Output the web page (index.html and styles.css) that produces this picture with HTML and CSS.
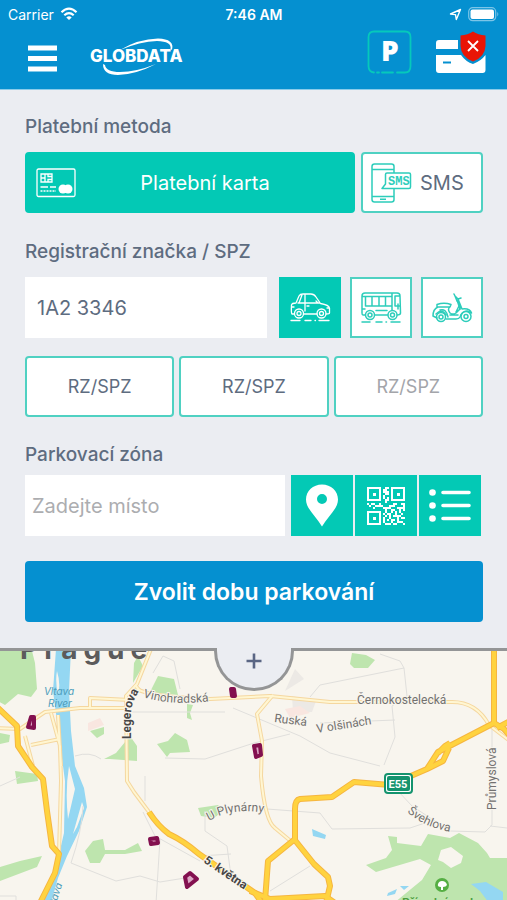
FILE: index.html
```html
<!DOCTYPE html>
<html lang="cs">
<head>
    <meta charset="UTF-8">
    <meta name="viewport" content="width=device-width, initial-scale=1.0">
    <title>Globdata parkování</title>
    <link rel="stylesheet" href="styles.css">
</head>
<body>
    <header class="header">
        <div class="status">
            <div class="status-left">
                <span>Carrier</span>
                <svg width="18" height="14" viewBox="0 0 18 14" fill="none" stroke="#fff" stroke-width="2.2">
                    <path d="M1.5 5.2Q9-1.8 16.5 5.2M4.3 8.3Q9 4 13.7 8.3"/>
                    <path d="M9 13L6.3 10.4Q9 8.2 11.7 10.4Z" fill="#fff" stroke="none"/>
                </svg>
            </div>
            <span class="time">7:46 AM</span>
            <div class="status-right">
                <svg width="13" height="13" viewBox="0 0 13 13" fill="none" stroke="#fff" stroke-width="1.4" stroke-linejoin="round">
                    <path d="M1.5 6L11.5 1.5L7.3 11.5L6.5 6.6Z"/>
                </svg>
                <svg width="32" height="15" viewBox="0 0 32 15">
                    <rect x="0.7" y="0.7" width="27" height="13" rx="4" fill="none" stroke="#7cc5e8" stroke-width="1.2"/>
                    <rect x="2.5" y="2.5" width="23.5" height="9.5" rx="2" fill="#fff"/>
                    <path d="M29.3 5Q31.3 7.2 29.3 9.5Z" fill="#7cc5e8"/>
                </svg>
            </div>
        </div>
        <nav class="nav">
            <button class="icon-btn menu-btn" type="button" aria-label="Menu">
                <svg width="29" height="27" viewBox="0 0 29 27" fill="#fff">
                    <path d="M0 0.5H29V5.5H0ZM0 11H29V16H0ZM0 21.5H29V26.5H0Z"/>
                </svg>
            </button>
            <a href="#" class="logo" aria-label="Globdata">
                <svg width="94" height="40" viewBox="0 0 94 40" fill="#fff">
                    <path d="M30 13Q48 2 68 1.5Q85 2 82 13L80.500 12Q82 4.500 67 4Q50 4.500 30 13Z"/>
                    <path d="M13 27Q13 38 28 38Q46 37.500 66 27Q46 35 30 35Q16 35 15 28Z"/>
                    <text x="0" y="25" class="logo-text">GLOBDATA</text>
                </svg>
            </a>
            <button class="icon-btn parking-btn" type="button" aria-label="Parkování">
                <svg width="45" height="44" viewBox="0 0 45 44" fill="none" stroke="#06c9bb" stroke-width="1.8" stroke-linecap="round">
                    <path d="M7 42.500Q1.500 42 1.500 36V7Q1.500 1.500 7 1.500H38Q43.500 1.500 43.500 7V36Q43.500 42.500 38 42.500H30M10 42.500H12M15 42.500H26"/>
                    <text x="14" y="31" class="p-text">P</text>
                </svg>
            </button>
            <button class="icon-btn" type="button" aria-label="Platební karta">
                <svg width="50" height="43" viewBox="0 0 50 43">
                    <path d="M3 9H22V18H0V12Q0 9 3 9ZM0 24H25Q30 31 37 33Q45 30 49.500 24V39Q49.500 42 46.500 42H3Q0 42 0 39Z" fill="#fff"/>
                    <path d="M7 31.500H15" stroke="#0590d0" stroke-width="2"/>
                    <path d="M37 0.500Q42 4 49.500 4.500V15Q49 26 37 30.500Q25 26 24.500 15V4.500Q32 4 37 0.500Z" fill="#e91506"/>
                    <path d="M32 10L42 20M42 10L32 20" stroke="#fff" stroke-width="1.8"/>
                </svg>
            </button>
        </nav>
    </header>

    <form class="panel" id="parkingForm">
        <h2>Platební metoda</h2>
        <div class="row methods">
            <button type="button" class="btn active card-btn">
                <svg width="40" height="30" viewBox="0 0 40 30" fill="none" stroke="#fff" stroke-width="1.3">
                    <rect x="1" y="1" width="38" height="27.500" rx="1.500"/>
                    <path d="M5 6H16V14H5ZM5 10H9M9 6V14M12 6V8.500H16M12 14V11.500H16"/>
                    <path d="M4.500 19H12M14 19H20"/>
                    <path d="M4.500 23H20" stroke-dasharray="2 1"/>
                    <circle cx="27" cy="21" r="4.500" fill="#fff" stroke="none"/>
                    <circle cx="32" cy="21" r="4.500" fill="#fff" stroke="none"/>
                </svg>
                <span>Platební karta</span>
            </button>
            <button type="button" class="btn sms-btn">
                <svg width="41" height="40" viewBox="0 0 41 40" fill="none" stroke="#2dcdbb" stroke-width="1.5" stroke-linejoin="round">
                    <rect x="1" y="1" width="22" height="38" rx="2.500"/>
                    <path d="M1 6.500H23M1 33.500H23M9 36.300H15"/>
                    <path d="M16 10H38Q39.500 10 39.500 11.500V24Q39.500 25.500 38 25.500H11L14.500 21V11.500Q14.500 10 16 10Z" fill="#fff"/>
                    <text x="17" y="22" class="sms-text">SMS</text>
                </svg>
                <span>SMS</span>
            </button>
        </div>

        <h2><label for="plate">Registrační značka / SPZ</label></h2>
        <div class="row vehicles">
            <input type="text" id="plate" class="plate" value="1A2 3346">
            <button type="button" class="tile active" aria-label="Auto">
                <svg width="41" height="30" viewBox="0 0 41 30" fill="none" stroke="#fff" stroke-width="1.3" stroke-linejoin="round" stroke-linecap="round">
                    <path d="M4 21H2Q1 20 1.500 12Q2 10 6 10L9 3Q10 1 13 1H21Q24 1 26 4L30.500 10.500Q39 12 39.500 15V20Q39.500 21 36 21M13.500 21H27M8 10H30M15 2V18M12 2L9 10M26 8L28 10M17 13H19M2 14H4M39 15H37"/>
                    <circle cx="9" cy="20.500" r="4.500"/><circle cx="9" cy="20.500" r="2"/>
                    <circle cx="31.500" cy="20.500" r="4.500"/><circle cx="31.500" cy="20.500" r="2"/>
                    <path d="M1 27.500H10M15 27.500H21M25 27.500H25.500M29 27.500H39"/>
                </svg>
            </button>
            <button type="button" class="tile" aria-label="Autobus">
                <svg width="41" height="32" viewBox="0 0 41 32" fill="none" stroke="#2dcdbb" stroke-width="1.5" stroke-linejoin="round" stroke-linecap="round">
                    <path d="M4 23H2Q1 23 1 21V4Q1 1 4 1H36Q39 1 39 4L39.500 21Q39.500 23 36 23M14 23H27M1 4.500H30M4.500 14H30M31 2V19M4.500 5V14M11 5V14M18 5V14M24.500 5V14M34 4V14H39M34 4H39M1 17H4M15 18.500H26M37 12V17"/>
                    <circle cx="9" cy="23" r="4.500" fill="#fff"/><circle cx="9" cy="23" r="2"/>
                    <circle cx="31.500" cy="23" r="4.500" fill="#fff"/><circle cx="31.500" cy="23" r="2"/>
                    <path d="M1 30H9M15 30H21M25 30H25.500M30 30H39"/>
                </svg>
            </button>
            <button type="button" class="tile" aria-label="Skútr">
                <svg width="41" height="30" viewBox="0 0 41 30" fill="none" stroke="#2dcdbb" stroke-width="1.5" stroke-linejoin="round" stroke-linecap="round">
                    <path d="M5 25L1 23Q1 16 6 14H18Q15 16 18 20Q21 22 24 20L28 16Q28 10 25 8L23 3L22 1M23 3L26 6L30 16Q38 15 39.500 20L35 18Q30 18 28 24Q27 26 24 26H14M5 14V11.500Q12 9 19 11.500L18 14M28 11L24 19M18 22H26M29 5L26 6"/>
                    <path d="M4 21Q10 15 14 22M8 17Q14 15 16 24M25 7L28 16"/>
                    <circle cx="9" cy="24" r="4.500"/><circle cx="9" cy="24" r="2"/>
                    <circle cx="34" cy="23.500" r="5"/><circle cx="34" cy="23.500" r="2"/>
                </svg>
            </button>
        </div>
        <div class="plates">
            <button type="button" class="btn">RZ/SPZ</button>
            <button type="button" class="btn">RZ/SPZ</button>
            <button type="button" class="btn muted">RZ/SPZ</button>
        </div>

        <h2><label for="zone">Parkovací zóna</label></h2>
        <div class="row zones">
            <input type="text" id="zone" class="zone" placeholder="Zadejte místo">
            <button type="button" class="tile active" aria-label="Mapa">
                <svg width="32" height="43" viewBox="0 0 32 43" fill="#fff">
                    <path fill-rule="evenodd" d="M16 0.500C7 0.500 0 7 0 15.500C0 25 10 32 16 42.500C22 32 32 25 32 15.500C32 7 25 0.500 16 0.500ZM16 10A5 5 0 1 1 16 20A5 5 0 1 1 16 10Z"/>
                </svg>
            </button>
            <button type="button" class="tile active" aria-label="QR kód">
                <svg width="38" height="38" viewBox="0 0 19 19" fill="#fff" shape-rendering="crispEdges">
                    <path fill-rule="evenodd" d="M0 0H7V7H0ZM1 1V6H6V1ZM12 0H19V7H12ZM13 1V6H18V1ZM0 12H7V19H0ZM1 13V18H6V13Z"/>
                    <path d="M3 3H4V4H3ZM15 3H16V4H15ZM3 15H4V16H3Z" stroke="#fff" stroke-width="0.5"/>
                    <path d="M9 0H11V1H9ZM8 1H10V3H8ZM10 2H11V4H10ZM9 3H10V4H9ZM8 4H9V6H8ZM10 5H11V7H10ZM9 6H10V8H9ZM0 8H1V9H0ZM2 8H4V9H2ZM1 9H2V10H1ZM4 9H8V10H4ZM3 10H4V11H3ZM6 8H7V9H6ZM8 10H12V11H8ZM9 11H10V13H9ZM11 9H14V10H11ZM13 8H15V9H13ZM17 8H19V9H17ZM15 10H18V11H15ZM18 9H19V12H18ZM12 11H14V12H12ZM16 11H17V13H16ZM10 13H12V14H10ZM8 13H9V14H8ZM12 12H13V13H12ZM14 12H15V14H14ZM9 14H10V15H9ZM11 14H12V16H11ZM13 14H17V15H13ZM17 13H18V14H17ZM8 15H9V18H8ZM10 16H11V17H10ZM12 16H14V17H12ZM15 15H16V18H15ZM17 15H19V16H17ZM9 18H12V19H9ZM13 18H15V19H13ZM12 17H13V18H12ZM16 17H18V18H16ZM18 18H19V19H18Z"/>
                </svg>
            </button>
            <button type="button" class="tile active" aria-label="Seznam">
                <svg width="42" height="33" viewBox="0 0 42 33" fill="#fff" stroke="#fff" stroke-linecap="round" stroke-width="3.6">
                    <path d="M14 3.500H40M14 16.500H40M14 29.500H40"/>
                    <g stroke="none"><circle cx="3.500" cy="3.500" r="3.300"/><circle cx="3.500" cy="16.500" r="3.300"/><circle cx="3.500" cy="29.500" r="3.300"/></g>
                </svg>
            </button>
        </div>

        <button type="submit" class="submit">Zvolit dobu parkování</button>
        <button type="button" class="expand" aria-label="Více">
            <svg width="16" height="16" viewBox="0 0 16 16" stroke="#5a6684" stroke-width="2.6"><path d="M8 0.500V15.500M0.500 8H15.500"/></svg>
        </button>
    </form>

    <main class="map">
        <svg viewBox="0 650 507 250" preserveAspectRatio="xMidYMin slice">
            <defs>
                <g id="main-roads">
                    <path d="M-3 706L17 725L18 745L32 766L43 778L47 810L52 845L59 853L55 872L40 902"/>
                    <path d="M149 811Q158 825 169 833Q184 840 199 853L255 892L262 902"/>
                    <path d="M494 646V722L438 751L427 768L390 784L354 781L332 796L300 798Q295 799 295 808V838L268 860L265 900M438 752L445 745L450 742M427 768L443 760L449 747M497 727L510 720"/>
                    <path d="M294 838L314 863L328 876L330 885L326 902"/>
                    <path d="M250 890L270 898L325 895L335 902M494 722L504 728L510 735"/>
                </g>
                <g id="side-roads">
                    <path d="M151 648L137 683L126 695L127 780L134 791L149 811"/>
                    <path d="M-3 727L20 728L45 711L80 707H126M90 707V697L130 699M137 688Q150 696 210 698L270 695L330 701H450Q476 700 489 724L510 740"/>
                    <path d="M51 712L60 745L61 780L59 853M58 714L61 765M25 735L33 765M31 744L60 738M273 694L257 713L262 740L261 775Q265 820 275 827L293 842M135 684L140 690"/>
                </g>
            </defs>

            <!-- parks -->
            <g fill="#bee5ae">
                <path d="M-2 650H32L35 662L37 688L31 696L18 693L5 704L-2 700ZM0 732L10 734L9 741L0 743Z"/>
                <path d="M138 655L143 665L133 682L134 662ZM158 675L174 678L178 694L150 691ZM187 703L193 704L190 712L192 719L187 717Z"/>
                <path d="M157 743L168 740L175 732L187 739L190 751L170 752L167 756ZM90 730L104 726V733L97 737ZM104 758L116 752L130 735L137 745V760L110 758Z"/>
                <path d="M352 652L366 654L375 659L368 667H354L350 663ZM15 770L37 773L38 780L17 783ZM0 866L20 860L42 855L37 866L0 880Z"/>
                <path d="M85 850L93 840L103 838L105 849L125 849L138 842L142 850L125 853L105 853L100 862L90 862ZM198 807L218 804L223 810L214 817L201 815Z"/>
                <path d="M388 835L397 836V842L421 845L428 833L450 837L459 832L478 842L487 852L490 857H507V902H394L411 888L422 879L431 864L420 858L376 871L366 864L386 857L392 849Z"/>
            </g>
            <path d="M441 849L451 846L463 855L461 862L451 867L443 861L438 859Z" fill="#f8f5ee"/>
            <path d="M295 668L304 678L285 690ZM292 695L316 700L312 711H293Z" fill="#ece9e5"/>
            <path d="M88 722L100 717L104 724L88 730ZM285 708L300 705L310 712L290 717Z" fill="#f9e6e0"/>

            <!-- river and ponds -->
            <path d="M56 648H71L69 690L71 730L75 765L84 787L87 806L79 830L67 855L58 877L51 902H38L54 875L64 832L65 780L59 735L53 690Z" fill="#94d7f2"/>
            <path d="M57 670Q61 683 58 694Q55 680 57 670ZM69 765L75 788L68 818Q65 790 69 765ZM82 801L84 807L77 826L73 833Z" fill="#f8f5ee"/>
            <path d="M312 828L326 834L325 838L313 835ZM471 883L486 881L503 891V902H489L480 890ZM388 892L397 888L395 893L387 895ZM400 885L409 885L404 889Z" fill="#94d7f2"/>

            <!-- minor streets -->
            <path class="street" d="M153 672L163 655L174 660L180 688M75 755Q90 750 101 758M127 711H225M233 707L300 735L330 752L380 765M165 757L205 758L254 742L290 733M71 862L116 880L140 875L160 881L185 877M83 805Q82 830 71 862M310 696L320 684L404 667L400 660L380 653M404 667L407 695L392 705L395 736L384 764M320 722L395 719M143 811L155 835L200 860M160 838L156 902M205 810V830L227 845L231 875M267 808L320 812L332 828L410 827L425 822M398 790L412 805L450 830L485 831L492 824V705M490 825L507 827M270 890L310 865M0 785L20 776M0 895H16V902M145 775V800M200 855L231 853"/>

            <use href="#side-roads" class="side-edge"/>
            <use href="#side-roads" class="side"/>
            <use href="#main-roads" class="main-edge"/>
            <use href="#main-roads" class="main-road"/>

            <!-- parking zones -->
            <g fill="#dba7c4" stroke="#83104f" stroke-width="4" stroke-linejoin="round">
                <path d="M31 716H34V727L28 726Z"/>
                <path d="M231 688H234L235 695H232Z"/>
                <path d="M254 745L260 744L261 754L256 756Z"/>
                <path d="M150 838L157 837L158 842L151 843Z"/>
                <path d="M190 872L197 878L187 886L185 876Z"/>
            </g>

            <rect x="385" y="773" width="27" height="19" rx="3" fill="#fff" stroke="#14936e" stroke-width="2"/>
            <rect x="387" y="775" width="23" height="15" rx="2" fill="#14936e"/>
            <text x="398" y="787" class="route">E55</text>

            <path id="vinohradska" d="M143 696Q170 705 213 700" fill="none"/>
            <path id="svehlova" d="M407 811Q425 827 452 831" fill="none"/>
            <path id="plynarny" d="M209 820Q232 806 266 812" fill="none"/>
            <path id="legerova" d="M131 738V712Q131 703 140 688" fill="none"/>
            <text x="20" y="658" class="city">Prague</text>
            <g class="names">
                <text><textPath href="#vinohradska">Vinohradská</textPath></text>
                <text><textPath href="#svehlova">Švehlova</textPath></text>
                <text><textPath href="#plynarny">U Plynárny</textPath></text>
                <text x="357" y="703">Černokostelecká</text>
                <text transform="translate(274 721) rotate(7)">Ruská</text>
                <text transform="translate(317 732) rotate(-9)">V olšinách</text>
                <text transform="translate(496 809) rotate(-90)">Průmyslová</text>
            </g>
            <g class="names strong">
                <text><textPath href="#legerova">Legerova</textPath></text>
                <text transform="translate(203 861) rotate(34)">5. května</text>
            </g>
            <g class="water">
                <text x="59" y="694" text-anchor="middle">Vltava</text>
                <text x="60" y="706" text-anchor="middle">River</text>
                <text transform="translate(53 912) rotate(-72)">Vltava</text>
            </g>
            <circle cx="442" cy="884" r="7" fill="#55ae43"/>
            <path d="M441 889V886Q437 886 438 883Q439 880 442 880Q446 880 447 884Q446 886 443 886V889Z" fill="#fff"/>
            <text x="402" y="906" class="park">Přírodní park</text>
        </svg>
    </main>
</body>
</html>
```
FILE: styles.css
```css
* {
    box-sizing: border-box;
}
body {
    margin: 0;
    min-height: 100vh;
    display: flex;
    flex-direction: column;
    font-family: Inter, "Liberation Sans", sans-serif;
    color: #5e6c80;
    background-color: #ebedf2;
}
button, input {
    font: inherit;
    color: inherit;
    margin: 0;
}
button {
    cursor: pointer;
}
svg {
    display: block;
    flex-shrink: 0;
}
.header {
    background-color: #0590d0;
    color: #fff;
    padding-bottom: 13px;
    border-bottom: 1px solid #8accea;
}
.status {
    display: grid;
    grid-template-columns: 1fr auto 1fr;
    align-items: center;
    height: 28px;
    padding: 0 7px 0 8px;
    font-size: 14px;
}
.status-left, .status-right {
    display: flex;
    align-items: center;
    gap: 6px;
}
.status-right {
    justify-content: flex-end;
}
.time {
    font-weight: 600;
}
.nav {
    display: flex;
    align-items: center;
    height: 48px;
    padding: 0 21px 0 28px;
}
.icon-btn {
    background: none;
    border: none;
    padding: 0;
}
.menu-btn {
    margin-top: 12px;
}
.logo {
    margin-left: 33px;
    margin-top: 10px;
}
.logo-text {
    font-size: 17px;
    font-weight: 800;
}
.parking-btn {
    margin-left: auto;
    margin-right: 24px;
}
.p-text {
    font-family: "Open Sans", sans-serif;
    font-size: 28px;
    font-weight: 800;
    fill: #fff;
    stroke: none;
}
.panel {
    position: relative;
    z-index: 1;
    padding: 23px 24px 26px 25px;
    background-color: #ebedf2;
    border-bottom: 3px solid #949596;
}
h2 {
    margin: 0;
    padding-bottom: 11px;
    font-size: 19px;
    line-height: 28px;
    font-weight: 500;
}
.row {
    display: flex;
    margin-bottom: 25px;
}
.btn, .tile {
    height: 61px;
    background-color: #fff;
    border: 2px solid #4fd1c2;
}
.btn {
    border-radius: 4px;
    font-size: 18px;
}
.tile {
    display: flex;
    flex: none;
    align-items: center;
    justify-content: center;
    width: 62px;
    padding: 0;
}
.active {
    background-color: #03c9b5;
    border-color: #03c9b5;
    color: #fff;
}
.methods {
    gap: 6px;
}
.methods .btn {
    display: flex;
    align-items: center;
    font-size: 20px;
}
.card-btn {
    flex: 1;
    padding: 0 9px;
}
.card-btn span {
    flex: 1;
    padding-right: 10px;
}
.sms-btn {
    width: 122px;
    padding: 0 8px;
    gap: 8px;
}
.sms-text {
    font-family: "Liberation Mono", monospace;
    font-size: 12px;
    font-weight: 700;
    fill: #2dcdbb;
    stroke: none;
}
.vehicles {
    gap: 9px;
    margin-bottom: 18px;
}
.plate, .zone {
    flex: 1;
    min-width: 0;
    height: 61px;
    border: none;
    border-radius: 0;
    background-color: #fff;
    font-size: 20px;
}
.plate {
    padding: 0 12px;
    margin-right: 3px;
}
.plates {
    display: grid;
    grid-template-columns: repeat(3, 1fr);
    gap: 5px;
    margin-bottom: 24px;
}
.muted {
    color: #a3a5aa;
}
.panel h2:nth-of-type(3) {
    padding-bottom: 6px;
}
.zones {
    gap: 2px;
    padding-right: 2px;
}
.zone {
    padding: 0 7px;
    margin-right: 4px;
}
.zone::placeholder {
    color: #acadb0;
    opacity: 1;
}
.submit {
    display: block;
    width: 100%;
    height: 61px;
    border: none;
    border-radius: 4px;
    background-color: #0590d0;
    color: #fff;
    font-size: 23px;
    font-weight: 600;
}
.expand {
    position: absolute;
    top: 100%;
    left: 50%;
    transform: translateX(-50%);
    display: flex;
    justify-content: center;
    width: 80px;
    height: 43px;
    padding: 5px 0 0;
    border: 3px solid #949596;
    border-top: none;
    border-radius: 0 0 40px 40px;
    background-color: #ebedf2;
}
.map {
    position: relative;
    flex: 1;
    min-height: 200px;
    background-color: #f8f5ee;
}
/* svg fills whatever height is left under the form */
.map svg {
    position: absolute;
    width: 100%;
    height: 100%;
}
.street {
    fill: none;
    stroke: #e0dfdc;
    stroke-width: 1;
}
.side-edge, .side, .main-edge, .main-road {
    fill: none;
    stroke-linejoin: round;
}
.side-edge {
    stroke: #f5d79f;
    stroke-width: 4;
}
.side {
    stroke: #fff6d2;
    stroke-width: 2;
}
.main-edge {
    stroke: #f6b640;
    stroke-width: 6;
}
.main-road {
    stroke: #ffd33f;
    stroke-width: 4;
}
.names {
    font-family: Roboto, sans-serif;
    font-size: 12px;
    fill: #73716f;
    stroke: #f8f5ee;
    stroke-width: 2;
    paint-order: stroke;
}
.strong {
    font-weight: 700;
    fill: #484747;
}
.city {
    font-size: 28px;
    font-weight: 700;
    letter-spacing: 6px;
    fill: #5c5b5b;
}
.route {
    font-family: Roboto, sans-serif;
    font-size: 11px;
    font-weight: 700;
    fill: #fff;
    text-anchor: middle;
}
.water {
    font-size: 10px;
    font-style: italic;
    fill: #4b9dbb;
}
.park {
    font-size: 12px;
    font-weight: 600;
    fill: #4b9c3d;
}
```
